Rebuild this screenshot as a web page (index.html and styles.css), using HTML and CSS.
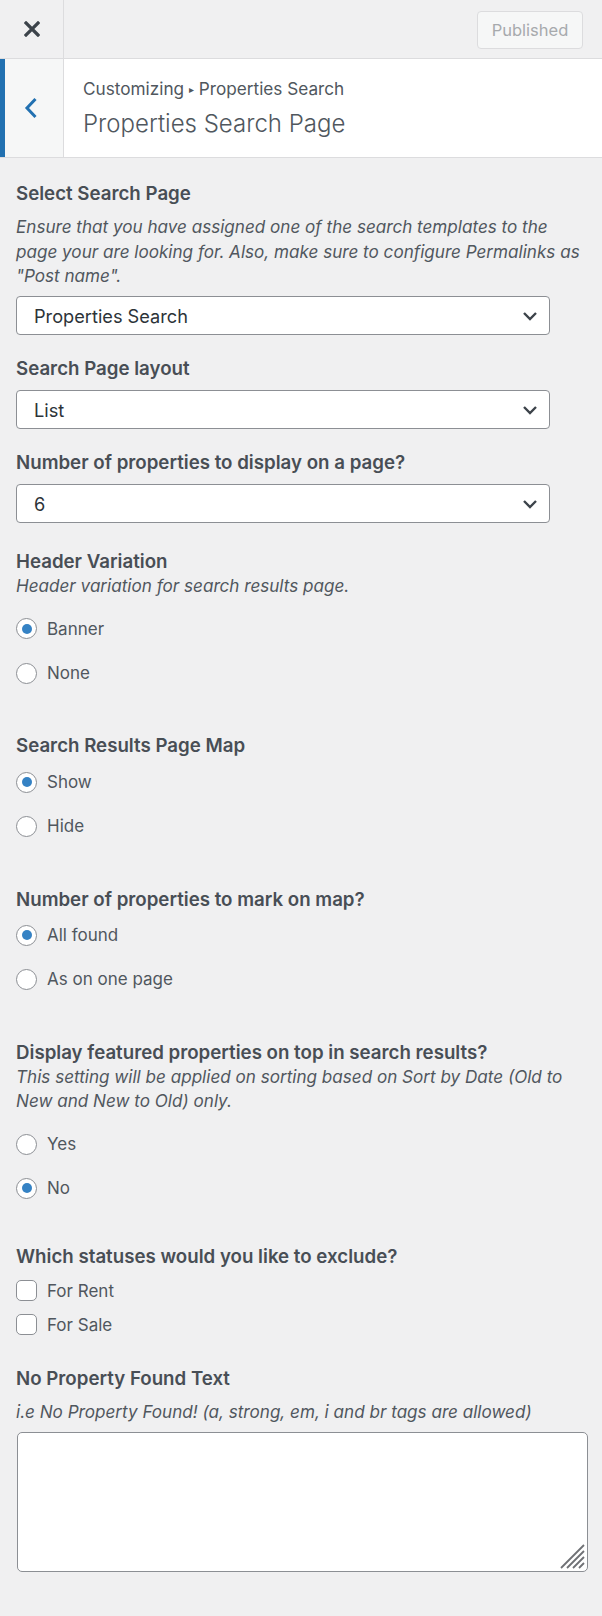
FILE: index.html
```html
<!DOCTYPE html>
<html lang="en">
<head>
<meta charset="utf-8">
<title>Properties Search Page</title>
<link rel="stylesheet" href="styles.css">
</head>
<body>
<div class="panel">
  <div class="topbar">
    <div class="close">
      <svg width="16" height="16" viewBox="0 0 16 16"><path d="M2 2 L14 14 M14 2 L2 14" stroke="#3c434a" stroke-width="3.2" stroke-linecap="square"/></svg>
    </div>
    <div class="topbar-fill"></div>
    <div class="published">Published</div>
  </div>
  <div class="section-head">
    <div class="back">
      <svg width="14" height="22" viewBox="0 0 14 22"><path d="M11.5 2 L3 11 L11.5 20" fill="none" stroke="#2271b1" stroke-width="3"/></svg>
    </div>
    <div class="head-text">
      <div class="crumb">Customizing <span class="tri">&#9656;</span> Properties Search</div>
      <div class="title">Properties Search Page</div>
    </div>
  </div>

  <div class="content">
    <div class="control ctrl-select">
      <div class="ctitle">Select Search Page</div>
      <div class="cdesc">Ensure that you have assigned one of the search templates to the page your are looking for. Also, make sure to configure Permalinks as "Post name".</div>
      <div class="select"><span>Properties Search</span><svg width="16" height="10" viewBox="0 0 16 10"><path d="M2 2 L8 8 L14 2" fill="none" stroke="#3c434a" stroke-width="2.4"/></svg></div>
    </div>

    <div class="control ctrl-select">
      <div class="ctitle">Search Page layout</div>
      <div class="select"><span>List</span><svg width="16" height="10" viewBox="0 0 16 10"><path d="M2 2 L8 8 L14 2" fill="none" stroke="#3c434a" stroke-width="2.4"/></svg></div>
    </div>

    <div class="control ctrl-select">
      <div class="ctitle">Number of properties to display on a page?</div>
      <div class="select"><span>6</span><svg width="16" height="10" viewBox="0 0 16 10"><path d="M2 2 L8 8 L14 2" fill="none" stroke="#3c434a" stroke-width="2.4"/></svg></div>
    </div>

    <div class="control ctrl-radio first-radio">
      <div class="ctitle">Header Variation</div>
      <div class="cdesc">Header variation for search results page.</div>
      <div class="options">
        <label class="opt"><span class="radio on"></span>Banner</label>
        <label class="opt"><span class="radio"></span>None</label>
      </div>
    </div>

    <div class="control ctrl-radio">
      <div class="ctitle">Search Results Page Map</div>
      <div class="options">
        <label class="opt"><span class="radio on"></span>Show</label>
        <label class="opt"><span class="radio"></span>Hide</label>
      </div>
    </div>

    <div class="control ctrl-radio">
      <div class="ctitle">Number of properties to mark on map?</div>
      <div class="options">
        <label class="opt"><span class="radio on"></span>All found</label>
        <label class="opt"><span class="radio"></span>As on one page</label>
      </div>
    </div>

    <div class="control ctrl-radio">
      <div class="ctitle">Display featured properties on top in search results?</div>
      <div class="cdesc">This setting will be applied on sorting based on Sort by Date (Old to New and New to Old) only.</div>
      <div class="options">
        <label class="opt"><span class="radio"></span>Yes</label>
        <label class="opt"><span class="radio on"></span>No</label>
      </div>
    </div>

    <div class="control ctrl-check">
      <div class="ctitle">Which statuses would you like to exclude?</div>
      <div class="checks">
        <label class="chk"><span class="box"></span>For Rent</label>
        <label class="chk"><span class="box"></span>For Sale</label>
      </div>
    </div>

    <div class="control ctrl-text">
      <div class="ctitle">No Property Found Text</div>
      <div class="cdesc">i.e No Property Found! (a, strong, em, i and br tags are allowed)</div>
      <div class="textarea">
        <svg class="grip" width="26" height="26" viewBox="0 0 26 26"><path d="M2 25 L25 2 M8 25 L25 8 M14 25 L25 14 M20 25 L25 20" stroke="#6f7175" stroke-width="1.8"/></svg>
      </div>
    </div>
  </div>
</div>
</body>
</html>
```

FILE: styles.css
```css
html, body {
  margin: 0;
  padding: 0;
  background: #f0f0f1;
}
body {
  font-family: Inter, "Noto Sans", "Liberation Sans", sans-serif;
  color: #50575e;
  width: 602px;
  height: 1616px;
  overflow: hidden;
}
.panel {
  display: flex;
  flex-direction: column;
}
.topbar {
  display: flex;
  height: 58px;
  border-bottom: 1px solid #dcdcde;
  background: #f0f0f1;
}
.close {
  width: 63px;
  border-right: 1px solid #dcdcde;
  display: flex;
  align-items: center;
  justify-content: center;
}
.topbar-fill { flex: 1; }
.published {
  margin: 11px 19px 0 0;
  width: 104px;
  height: 36px;
  border: 1px solid #dcdcde;
  border-radius: 4px;
  background: #f6f7f7;
  color: #a7aaad;
  font-size: 16.5px;
  display: flex;
  align-items: center;
  justify-content: center;
}
.section-head {
  display: flex;
  height: 98px;
  background: #fff;
  border-bottom: 1px solid #dcdcde;
}
.back {
  width: 58px;
  box-sizing: border-box;
  padding-left: 19px;
  border-left: 5px solid #2271b1;
  border-right: 1px solid #dcdcde;
  background: #f6f7f7;
  display: flex;
  align-items: center;
  flex: 0 0 64px;
}
.head-text {
  padding: 18px 0 0 19px;
}
.crumb {
  font-size: 17.2px;
  line-height: 24px;
  color: #50575e;
}
.tri { font-size: 10px; vertical-align: 2px; }
.title {
  font-size: 24px;
  line-height: 34px;
  font-weight: 300;
  margin-top: 6px;
  color: #50575e;
}
.content {
  padding: 24px 14px 0 16px;
}
.control { display: flex; flex-direction: column; }
.ctitle {
  font-size: 18.7px;
  line-height: 24px;
  font-weight: 600;
  color: #484e55;
}
.cdesc {
  font-size: 17.1px;
  line-height: 24.7px;
  font-style: italic;
  color: #50575e;
}
.ctrl-select .ctitle { margin-bottom: 9px; }
.ctrl-select .cdesc { margin-bottom: 7px; }
.ctrl-select + .ctrl-select { margin-top: 22px; }
.select {
  width: 534px;
  box-sizing: border-box;
  height: 39px;
  border: 1px solid #8c8f94;
  border-radius: 4px;
  background: #fff;
  display: flex;
  align-items: center;
  justify-content: space-between;
  padding: 0 11px 0 17px;
  font-size: 18.2px;
  color: #2c3338;
}
.first-radio { margin-top: 27px; }
.ctrl-radio + .ctrl-radio { margin-top: 39px; }
.ctrl-radio .ctitle { margin-bottom: 1.5px; }
.ctrl-radio .cdesc { margin-top: -1.5px; margin-bottom: 8px; }
.options { display: flex; flex-direction: column; }
.opt {
  display: flex;
  align-items: center;
  height: 44.3px;
  font-size: 17px;
  color: #50575e;
}
.radio {
  width: 19px;
  height: 19px;
  border: 1px solid #8c8f94;
  border-radius: 50%;
  background: #fff;
  margin-right: 10px;
  display: flex;
  align-items: center;
  justify-content: center;
}
.radio.on::after {
  content: "";
  width: 10px;
  height: 10px;
  border-radius: 50%;
  background: #3582c4;
}
.ctrl-check { margin-top: 34px; }
.checks { display: flex; flex-direction: column; margin-top: 5px; }
.chk {
  display: flex;
  align-items: center;
  height: 34px;
  font-size: 17px;
  color: #50575e;
}
.box {
  width: 19px;
  height: 19px;
  border: 1px solid #8c8f94;
  border-radius: 5px;
  background: #fff;
  margin-right: 10px;
}
.ctrl-text { margin-top: 25.5px; }
.ctrl-text .cdesc { margin-top: 8.5px; margin-bottom: 7.5px; }
.textarea {
  width: 571px;
  height: 140px;
  box-sizing: border-box;
  border: 1px solid #8c8f94;
  border-radius: 5px;
  background: #fff;
  margin-left: 1px;
  display: flex;
  align-items: flex-end;
  justify-content: flex-end;
  padding: 0 2px 2px 0;
}
```
